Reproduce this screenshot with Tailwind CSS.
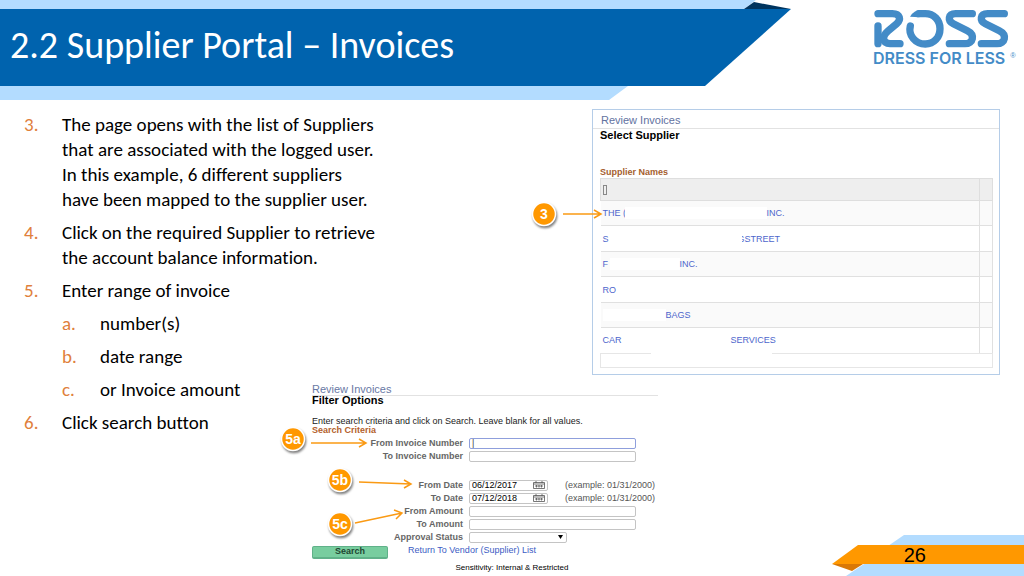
<!DOCTYPE html>
<html lang="en">
<head>
<meta charset="utf-8">
<meta name="viewport" content="width=device-width, initial-scale=1">
<title>2.2 Supplier Portal – Invoices</title>
<script src="https://cdn.jsdelivr.net/npm/@tailwindcss/browser@4"></script>
</head>
<body class="bg-white text-black font-['Liberation_Sans',Arial,sans-serif]">
<div class="relative flex min-h-screen flex-col overflow-hidden">

  <header class="relative flex h-25 items-start justify-between">
    <svg class="absolute left-0 top-0" width="800" height="100" viewBox="0 0 800 100" aria-hidden="true">
      <path d="M0 0H756L744 9L628 86L609 100H0Z" fill="#b3dcff"/>
      <path d="M744 9L754 2L791 9Z" fill="#00355f"/>
      <path d="M0 9H791L705 86H0Z" fill="#0063ae"/>
    </svg>
    <h1 class="relative pl-[10px] pt-[25px] text-[38px] leading-10 text-white font-['Carlito','Lato',sans-serif] [font-variant-ligatures:none]">2.2 Supplier Portal – Invoices</h1>
    <svg class="relative" width="164" height="75" viewBox="0 0 492 225" role="img" aria-label="Ross Dress for Less">
      <g fill="none" stroke="#438bc7" stroke-width="22" stroke-linecap="round" stroke-linejoin="round">
        <path d="M54 78V131"/>
        <path d="M54 41H97C121 41 124 59 110 71L84 93C64 110 68 131 90 131H120"/>
        <path d="M151 78C144 106 166 132 196 132C222 132 240 112 240 86C240 60 221 41 196 41H176"/>
        <path d="M337 41H287C264 41 262 62 280 71L322 92C346 104 340 131 315 131H268"/>
        <path d="M433 41H383C360 41 358 62 376 71L418 92C442 104 436 131 411 131H364"/>
      </g>
      <path d="M150 50Q160 31 186 30L178 52Z" fill="#438bc7"/>
      <text x="39" y="192" font-family="Inter, sans-serif" font-weight="600" font-size="48" fill="#438bc7">DRESS FOR LESS</text>
      <text x="451" y="175" font-family="Liberation Sans, sans-serif" font-size="22" fill="#438bc7">®</text>
    </svg>
  </header>

  <main class="grid grow grid-cols-[312px_280px_1fr] grid-rows-[auto_1fr] pr-6 pt-[9px]">
    <ol class="col-span-2 col-start-1 row-span-2 row-start-1 flex w-96 flex-col gap-2 self-start pl-6 pt-[3px] text-[19px] leading-[25px] font-['Carlito','Lato',sans-serif] [font-variant-ligatures:none]">
      <li class="flex"><span class="w-[38px] shrink-0 text-[#e0803c]">3.</span><p class="whitespace-nowrap">The page opens with the list of Suppliers<br>that are associated with the logged user.<br>In this example, 6 different suppliers<br>have been mapped to the supplier user.</p></li>
      <li class="flex"><span class="w-[38px] shrink-0 text-[#e0803c]">4.</span><p class="whitespace-nowrap">Click on the required Supplier to retrieve<br>the account balance information.</p></li>
      <li class="flex"><span class="w-[38px] shrink-0 text-[#e0803c]">5.</span>
        <div class="flex flex-col gap-2"><p>Enter range of invoice</p>
          <ol class="flex flex-col gap-2">
            <li class="flex"><span class="w-[38px] text-[#e0803c]">a.</span>number(s)</li>
            <li class="flex"><span class="w-[38px] text-[#e0803c]">b.</span>date range</li>
            <li class="flex"><span class="w-[38px] text-[#e0803c]">c.</span>or Invoice amount</li>
          </ol>
        </div></li>
      <li class="flex"><span class="w-[38px] shrink-0 text-[#e0803c]">6.</span><p>Click search button</p></li>
    </ol>

    <section class="col-start-3 row-start-1 border border-[#b5cde8] bg-white pb-1.5">
      <h2 class="border-b border-[#e2e2e2] pb-px pl-2 pt-[3px] text-[11px] leading-[14px] text-[#62729f]">Review Invoices</h2>
      <h3 class="pl-[7px] text-[11px] font-bold leading-3">Select Supplier</h3>
      <div class="pl-[7px] pr-[6px] pt-[25px]">
        <table class="w-full table-fixed border-collapse text-left text-[9px] leading-3 text-[#4d66cc]">
          <caption class="text-left text-[9px] font-bold leading-3 text-[#a5602f]">Supplier Names</caption>
          <colgroup><col><col class="w-[13px]"></colgroup>
          <thead><tr class="h-[22px] border border-[#dedede] bg-[#eeeeee]"><th class="pl-0.5"><span class="block h-[10px] w-1 border border-[#888]"></span></th><th class="border-l border-[#dedede]"></th></tr></thead>
          <tbody>
            <tr class="h-[25px] border-b border-r border-[#e0e0e0] bg-[#fafafa]"><td class="pl-0.5"><div class="flex"><a href="#" class="w-[22px] whitespace-nowrap">THE (</a><span class="w-[142px] bg-white"></span><a href="#">INC.</a></div></td><td class="border-l border-[#e0e0e0]"></td></tr>
            <tr class="h-[26px] border-b border-r border-[#e0e0e0]"><td class="pl-0.5"><div class="flex"><a href="#" class="w-2">S</a><span class="z-10 -mr-1 w-[131px] bg-white"></span><a href="#">GSTREET</a></div></td><td class="border-l border-[#e0e0e0]"></td></tr>
            <tr class="h-[25px] border-b border-r border-[#e0e0e0] bg-[#fafafa]"><td class="pl-0.5"><div class="flex"><a href="#" class="w-[7px]">F</a><span class="w-[70px] bg-white"></span><a href="#">INC.</a></div></td><td class="border-l border-[#e0e0e0]"></td></tr>
            <tr class="h-[26px] border-b border-r border-[#e0e0e0]"><td class="pl-0.5"><a href="#">RO</a></td><td class="border-l border-[#e0e0e0]"></td></tr>
            <tr class="h-[25px] border-b border-r border-[#e0e0e0] bg-[#fafafa]"><td class="pl-0.5"><div class="flex"><span class="w-[63px] bg-white"></span><a href="#">BAGS</a></div></td><td class="border-l border-[#e0e0e0]"></td></tr>
            <tr class="h-[25px] border-r border-[#e0e0e0]"><td class="pl-0.5"><div class="flex"><a href="#" class="w-32">CAR</a><a href="#">SERVICES</a></div></td><td class="border-l border-[#e0e0e0]"></td></tr>
          </tbody>
        </table>
        <div class="flex h-[15px] border-x border-b border-[#e6e6e6]"><span class="h-px w-[50px] bg-[#e6e6e6]"></span><span class="w-[121px]"></span><span class="h-px grow bg-[#e6e6e6]"></span></div>
      </div>
    </section>

    <form class="col-span-2 col-start-2 row-start-2 w-[346px] pt-[9px] text-[9px] leading-[13px] text-[#555]">
      <h2 class="border-b border-[#e2e2e2] text-[11px] leading-[11px] text-[#6878a4]">Review Invoices</h2>
      <h3 class="text-[11px] font-bold leading-[8px] text-black">Filter Options</h3>
      <p class="whitespace-nowrap pt-[13px] leading-[9px] text-[#222]">Enter search criteria and click on Search. Leave blank for all values.</p>
      <h4 class="text-[9px] font-bold leading-[8px] text-[#b35f2c]">Search Criteria</h4>
      <div class="grid grid-cols-[151px_79px_82px] items-center gap-x-[6px] pt-[3px] [&>label]:text-right [&>label]:font-bold [&>label]:text-[#666]">
        <label for="fi">From Invoice Number</label><input id="fi" value="|" class="col-span-2 block h-[11px] rounded-xs border border-[#8f9fdc] px-0.5 text-[#444]">
        <label for="ti">To Invoice Number</label><input id="ti" class="col-span-2 block h-[11px] rounded-xs border border-[#c4c4c4] px-0.5">
        <span class="col-span-3 h-4"></span>
        <label for="fd">From Date</label>
        <div class="flex h-[11px] items-center justify-between rounded-xs border border-[#c4c4c4] px-0.5"><input id="fd" value="06/12/2017" class="h-[9px] w-14 text-black"><svg width="12" height="8" viewBox="0 0 12 8" fill="none" stroke="#555" aria-hidden="true"><path d="M.5 1.5H11.5V7.5H.5ZM3 0V2M9 0V2M.5 3H11.5M2 5H10M3.5 4V6.5M6 4V6.5M8.5 4V6.5" stroke-width=".8"/></svg></div>
        <span class="whitespace-nowrap pl-[11px]">(example: 01/31/2000)</span>
        <label for="td">To Date</label>
        <div class="flex h-[11px] items-center justify-between rounded-xs border border-[#c4c4c4] px-0.5"><input id="td" value="07/12/2018" class="h-[9px] w-14 text-black"><svg width="12" height="8" viewBox="0 0 12 8" fill="none" stroke="#555" aria-hidden="true"><path d="M.5 1.5H11.5V7.5H.5ZM3 0V2M9 0V2M.5 3H11.5M2 5H10M3.5 4V6.5M6 4V6.5M8.5 4V6.5" stroke-width=".8"/></svg></div>
        <span class="whitespace-nowrap pl-[11px]">(example: 01/31/2000)</span>
        <label for="fa">From Amount</label><input id="fa" class="col-span-2 block h-[11px] rounded-xs border border-[#c4c4c4] px-0.5">
        <label for="ta">To Amount</label><input id="ta" class="col-span-2 block h-[11px] rounded-xs border border-[#c4c4c4] px-0.5">
        <label for="as">Approval Status</label>
        <div class="col-span-2 grid w-[98px] items-center"><select id="as" class="col-start-1 row-start-1 h-[11px] appearance-none rounded-xs border border-[#c4c4c4] bg-white"><option></option></select><svg class="pointer-events-none col-start-1 row-start-1 mr-1 justify-self-end" width="5" height="4" viewBox="0 0 5 4" aria-hidden="true"><path d="M0 0H5L2.500 4Z"/></svg></div>
      </div>
      <div class="flex items-start gap-5 pt-0.5">
        <button type="button" class="h-[13px] w-[76px] rounded-xs border border-b-2 border-[#60b189] bg-[#78cd9f] font-bold leading-[9px] text-[#1f4632]">Search</button>
        <a href="#" class="whitespace-nowrap leading-[9px] text-[#3c5cc4]">Return To Vendor (Supplier) List</a>
      </div>
    </form>
  </main>

  <footer class="absolute inset-x-0 bottom-0 h-[41px]">
    <svg class="absolute bottom-0 right-0" width="204" height="41" viewBox="820 535 204 41" aria-hidden="true">
      <path d="M904 535H1024V576H846L864 564L888 546Z" fill="#b3dcff"/>
      <path d="M832 564L858 545H1024V564Z" fill="#ff9800"/>
      <path d="M832 564H863L852 571Z" fill="#d97806"/>
    </svg>
    <p class="absolute inset-x-0 bottom-1 text-center text-[8px] leading-2">Sensitivity: Internal &amp; Restricted</p>
    <p class="absolute bottom-[10px] right-[98px] text-[20px] leading-[22px]">26</p>
  </footer>

  <svg class="pointer-events-none absolute left-0 top-0" width="620" height="576" viewBox="0 0 620 576" role="img" aria-label="Callouts 3, 5a, 5b and 5c">
    <g fill="none" stroke="#fa9a14" stroke-width="1.500">
      <path d="M563 214H601M594 210L601 214L594 218"/>
      <path d="M311 443H366M359 439L366 443L359 447"/>
      <path d="M359 482L411 484M404 480L411 484L404 488"/>
      <path d="M355 523L402 513M394 510L402 513L396 519"/>
    </g>
    <g fill="#ff9800" stroke="#fff" stroke-width="1.500" class="drop-shadow-[1px_2px_1px_#00000080]">
      <circle cx="544" cy="214" r="11.500"/><circle cx="293" cy="439" r="11.500"/><circle cx="340" cy="480" r="11.500"/><circle cx="340" cy="524" r="11.500"/>
    </g>
    <g fill="#fff" font-size="14" font-weight="700" text-anchor="middle">
      <text x="544" y="219">3</text><text x="293" y="444">5a</text><text x="340" y="485">5b</text><text x="340" y="529">5c</text>
    </g>
  </svg>
</div>
</body>
</html>
